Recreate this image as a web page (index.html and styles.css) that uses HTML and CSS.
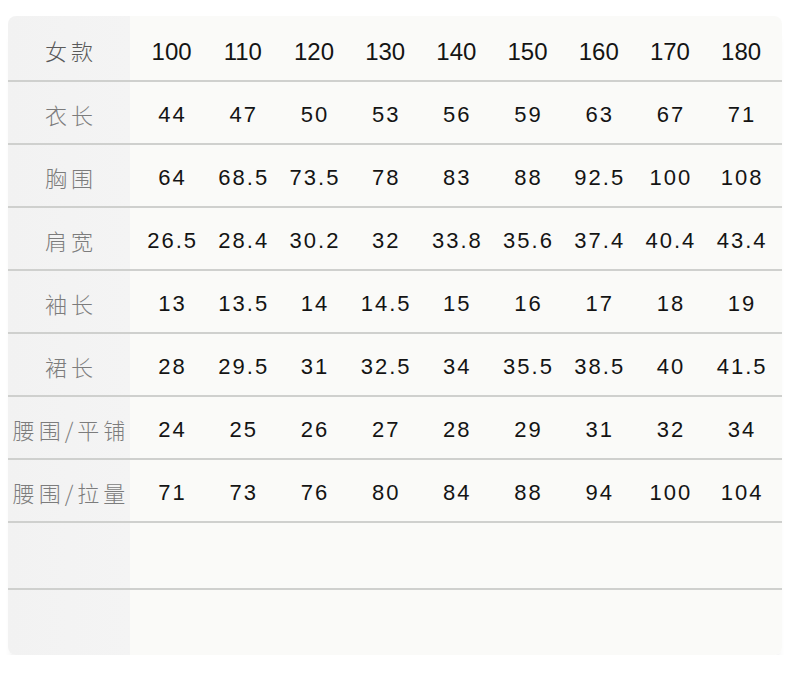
FILE: index.html
```html
<!DOCTYPE html>
<html lang="zh">
<head>
<meta charset="utf-8">
<link rel="stylesheet" href="styles.css">
</head>
<body>
<div class="card">
  <div class="row head">
    <div class="lab">女款</div>
    <div class="num">100</div><div class="num">110</div><div class="num">120</div><div class="num">130</div><div class="num">140</div><div class="num">150</div><div class="num">160</div><div class="num">170</div><div class="num">180</div>
  </div>
  <div class="row">
    <div class="lab">衣长</div>
    <div class="num">44</div><div class="num">47</div><div class="num">50</div><div class="num">53</div><div class="num">56</div><div class="num">59</div><div class="num">63</div><div class="num">67</div><div class="num">71</div>
  </div>
  <div class="row">
    <div class="lab">胸围</div>
    <div class="num">64</div><div class="num">68.5</div><div class="num">73.5</div><div class="num">78</div><div class="num">83</div><div class="num">88</div><div class="num">92.5</div><div class="num">100</div><div class="num">108</div>
  </div>
  <div class="row">
    <div class="lab">肩宽</div>
    <div class="num">26.5</div><div class="num">28.4</div><div class="num">30.2</div><div class="num">32</div><div class="num">33.8</div><div class="num">35.6</div><div class="num">37.4</div><div class="num">40.4</div><div class="num">43.4</div>
  </div>
  <div class="row">
    <div class="lab">袖长</div>
    <div class="num">13</div><div class="num">13.5</div><div class="num">14</div><div class="num">14.5</div><div class="num">15</div><div class="num">16</div><div class="num">17</div><div class="num">18</div><div class="num">19</div>
  </div>
  <div class="row">
    <div class="lab">裙长</div>
    <div class="num">28</div><div class="num">29.5</div><div class="num">31</div><div class="num">32.5</div><div class="num">34</div><div class="num">35.5</div><div class="num">38.5</div><div class="num">40</div><div class="num">41.5</div>
  </div>
  <div class="row">
    <div class="lab">腰围/平铺</div>
    <div class="num">24</div><div class="num">25</div><div class="num">26</div><div class="num">27</div><div class="num">28</div><div class="num">29</div><div class="num">31</div><div class="num">32</div><div class="num">34</div>
  </div>
  <div class="row">
    <div class="lab">腰围/拉量</div>
    <div class="num">71</div><div class="num">73</div><div class="num">76</div><div class="num">80</div><div class="num">84</div><div class="num">88</div><div class="num">94</div><div class="num">100</div><div class="num">104</div>
  </div>
  <div class="row empty"></div>
  <div class="row empty last"></div>
</div>
</body>
</html>
```
FILE: styles.css
```css
html, body {
  margin: 0;
  padding: 0;
  background: #ffffff;
}
body {
  padding: 16px 0 0 8px;
}
.card {
  width: 774px;
  border-radius: 8px;
  background: linear-gradient(to right, #f2f2f2 0, #f4f4f4 122px, #fafaf8 122px, #fafaf8 100%);
  box-shadow: 0 14px 10px -8px rgba(0, 0, 0, 0.2);
  overflow: hidden;
}
.row {
  display: grid;
  grid-template-columns: 128px repeat(9, 71.2px);
  align-items: center;
  height: 61px;
  border-bottom: 2px solid #cfd0ce;
}
.row.head {
  height: 64px;
}
.row.empty {
  height: 65px;
}
.row.last {
  border-bottom: none;
}
.lab {
  text-align: center;
  white-space: nowrap;
  padding-top: 2px;
  padding-right: 2px;
  font-family: "Noto Sans CJK SC", "Liberation Sans", sans-serif;
  font-size: 22px;
  letter-spacing: 4px;
  color: #7c7c7c;
  font-weight: 300;
}
.head .lab {
  color: #5a5a5a;
  padding-top: 4px;
}
.num {
  text-align: center;
  white-space: nowrap;
  padding-top: 5px;
  font-family: "Liberation Sans", Arial, sans-serif;
  font-size: 22px;
  letter-spacing: 2px;
  padding-left: 2px;
  color: #141414;
}
.head .num {
  font-size: 24px;
  letter-spacing: 0;
  padding-left: 0;
  padding-top: 8px;
}
```
